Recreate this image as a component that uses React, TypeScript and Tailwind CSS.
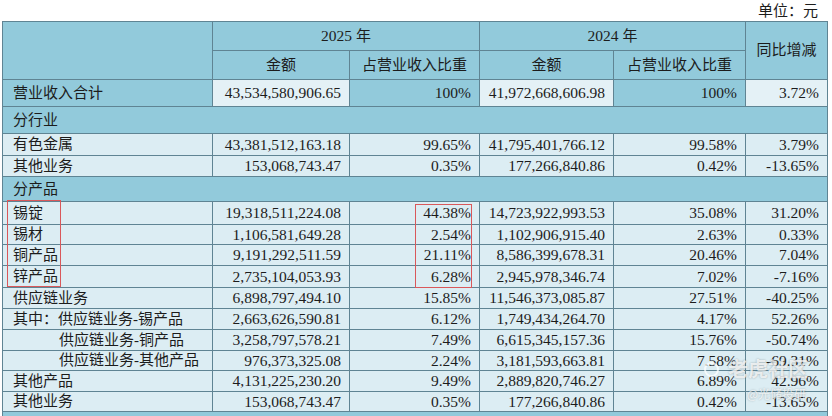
import React from 'react';

type Row = {
  label: string;
  indent?: boolean;
  a: string;
  ap: string;
  b: string;
  bp: string;
  yoy: string;
  h: string;
};

const TOTAL = {
  label: '营业收入合计',
  a: '43,534,580,906.65',
  ap: '100%',
  b: '41,972,668,606.98',
  bp: '100%',
  yoy: '3.72%',
};

const INDUSTRY: Row[] = [
  { label: '有色金属', a: '43,381,512,163.18', ap: '99.65%', b: '41,795,401,766.12', bp: '99.58%', yoy: '3.79%', h: 'h-[22px]' },
  { label: '其他业务', a: '153,068,743.47', ap: '0.35%', b: '177,266,840.86', bp: '0.42%', yoy: '-13.65%', h: 'h-[21px]' },
];

const PRODUCT: Row[] = [
  { label: '锡锭', a: '19,318,511,224.08', ap: '44.38%', b: '14,723,922,993.53', bp: '35.08%', yoy: '31.20%', h: 'h-[23px]' },
  { label: '锡材', a: '1,106,581,649.28', ap: '2.54%', b: '1,102,906,915.40', bp: '2.63%', yoy: '0.33%', h: 'h-[20px]' },
  { label: '铜产品', a: '9,191,292,511.59', ap: '21.11%', b: '8,586,399,678.31', bp: '20.46%', yoy: '7.04%', h: 'h-[21px]' },
  { label: '锌产品', a: '2,735,104,053.93', ap: '6.28%', b: '2,945,978,346.74', bp: '7.02%', yoy: '-7.16%', h: 'h-[22px]' },
  { label: '供应链业务', a: '6,898,797,494.10', ap: '15.85%', b: '11,546,373,085.87', bp: '27.51%', yoy: '-40.25%', h: 'h-[21px]' },
  { label: '其中：供应链业务-锡产品', a: '2,663,626,590.81', ap: '6.12%', b: '1,749,434,264.70', bp: '4.17%', yoy: '52.26%', h: 'h-[21px]' },
  { label: '供应链业务-铜产品', indent: true, a: '3,258,797,578.21', ap: '7.49%', b: '6,615,345,157.36', bp: '15.76%', yoy: '-50.74%', h: 'h-[21px]' },
  { label: '供应链业务-其他产品', indent: true, a: '976,373,325.08', ap: '2.24%', b: '3,181,593,663.81', bp: '7.58%', yoy: '-69.31%', h: 'h-[20px]' },
  { label: '其他产品', a: '4,131,225,230.20', ap: '9.49%', b: '2,889,820,746.27', bp: '6.89%', yoy: '42.96%', h: 'h-[21px]' },
  { label: '其他业务', a: '153,068,743.47', ap: '0.35%', b: '177,266,840.86', bp: '0.42%', yoy: '-13.65%', h: 'h-[20px]' },
];

const cell = 'border border-[#5f8493] px-[8px] py-0 leading-none whitespace-nowrap overflow-hidden';
const blue = 'bg-[#92cadb]';
const light = 'bg-[#dcedf3]';
const cjk = 'text-[15px]';

const DataRow = ({ r }: { r: Row }) => (
  <tr className={r.h}>
    <td className={`${cell} ${light} ${cjk} ${r.indent ? 'pl-[56px]' : 'pl-[10px]'} text-left`}>{r.label}</td>
    <td className={`${cell} ${light} text-right`}>{r.a}</td>
    <td className={`${cell} ${light} text-right`}>{r.ap}</td>
    <td className={`${cell} ${light} text-right`}>{r.b}</td>
    <td className={`${cell} ${light} text-right`}>{r.bp}</td>
    <td className={`${cell} ${light} text-right`}>{r.yoy}</td>
  </tr>
);

const SectionRow = ({ label, h }: { label: string; h: string }) => (
  <tr className={h}>
    <td colSpan={6} className={`${cell} ${blue} ${cjk} pl-[10px] text-left`}>
      {label}
    </td>
  </tr>
);

export default function App() {
  return (
    <div
      className="relative h-[416px] w-[832px] overflow-hidden bg-white text-[15.5px] text-[#1c1c1c]"
      style={{ fontFamily: '"Liberation Serif", "Noto Sans CJK SC", serif' }}
    >
      <div className="flex h-[21px] items-center justify-end pr-[14px] pt-[2px] text-[15px]">单位：元</div>
      <table className="ml-[2px] w-[825px] table-fixed border-collapse">
        <colgroup>
          <col className="w-[210px]" />
          <col className="w-[137px]" />
          <col className="w-[130px]" />
          <col className="w-[134px]" />
          <col className="w-[132px]" />
          <col className="w-[82px]" />
        </colgroup>
        <tbody>
          <tr className="h-[29px]">
            <td rowSpan={2} className={`${cell} ${blue}`} />
            <td colSpan={2} className={`${cell} ${blue} text-center`}>
              2025 <span className={cjk}>年</span>
            </td>
            <td colSpan={2} className={`${cell} ${blue} text-center`}>
              2024 <span className={cjk}>年</span>
            </td>
            <td rowSpan={2} className={`${cell} ${blue} ${cjk} text-center`}>同比增减</td>
          </tr>
          <tr className="h-[29px]">
            <td className={`${cell} ${blue} ${cjk} text-center`}>金额</td>
            <td className={`${cell} ${blue} ${cjk} text-center`}>占营业收入比重</td>
            <td className={`${cell} ${blue} ${cjk} text-center`}>金额</td>
            <td className={`${cell} ${blue} ${cjk} text-center`}>占营业收入比重</td>
          </tr>
          <tr className="h-[27px]">
            <td className={`${cell} ${blue} ${cjk} pl-[10px] text-left`}>{TOTAL.label}</td>
            <td className={`${cell} bg-[#e4f1f6] text-right`}>{TOTAL.a}</td>
            <td className={`${cell} ${blue} text-right`}>{TOTAL.ap}</td>
            <td className={`${cell} bg-[#e4f1f6] text-right`}>{TOTAL.b}</td>
            <td className={`${cell} ${blue} text-right`}>{TOTAL.bp}</td>
            <td className={`${cell} bg-[#e4f1f6] text-right`}>{TOTAL.yoy}</td>
          </tr>
          <SectionRow label="分行业" h="h-[27px]" />
          {INDUSTRY.map((r, i) => (
            <DataRow key={i} r={r} />
          ))}
          <SectionRow label="分产品" h="h-[25px]" />
          {PRODUCT.map((r, i) => (
            <DataRow key={i} r={r} />
          ))}
          <tr className="h-[20px]">
            <td colSpan={6} className={`${cell} ${blue}`} />
          </tr>
        </tbody>
      </table>

      {/* red highlight boxes */}
      <div className="absolute left-[7px] top-[200px] h-[87px] w-[54px] border-[1.5px] border-[#d9585a]" />
      <div className="absolute left-[415px] top-[204px] h-[84px] w-[57px] border-[1.5px] border-[#d9585a]" />

      {/* watermark */}
      <div
        className="pointer-events-none absolute left-[704px] top-[358px] flex flex-col items-end text-white/75 [text-shadow:0_0_2px_rgba(0,0,0,0.3)]"
        style={{ fontFamily: '"Noto Sans CJK SC", sans-serif' }}
      >
        <div className="flex items-center gap-[9px] text-[20px] font-bold leading-[22px]">
          <span className="inline-block h-[15px] w-[15px] rounded-full border-2 border-white/75" />
          <span>老虎社区</span>
        </div>
        <div className="mt-[7px] pr-[2px] text-[12px] leading-[14px]">@光储投研</div>
      </div>
    </div>
  );
}
